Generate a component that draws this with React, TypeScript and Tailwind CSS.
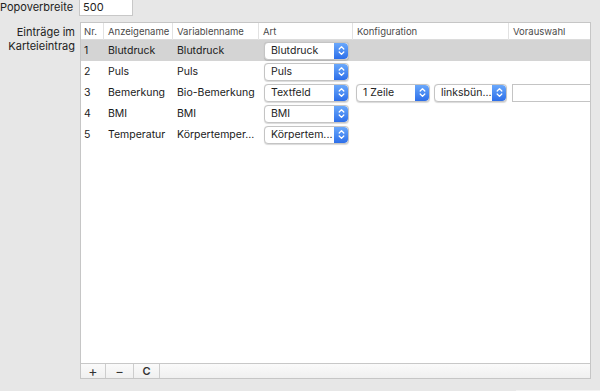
const rows = [
  { nr: '1', name: 'Blutdruck', variable: 'Blutdruck', art: 'Blutdruck', selected: true },
  { nr: '2', name: 'Puls', variable: 'Puls', art: 'Puls' },
  { nr: '3', name: 'Bemerkung', variable: 'Bio-Bemerkung', art: 'Textfeld', config: true },
  { nr: '4', name: 'BMI', variable: 'BMI', art: 'BMI' },
  { nr: '5', name: 'Temperatur', variable: 'Körpertemper...', art: 'Körpertem...' },
]

const cols = 'grid grid-cols-[23px_69px_86px_94px_156px_1fr]'

function Stepper() {
  return (
    <div className="w-[14px] self-stretch rounded-r-[4px] bg-gradient-to-b from-[#6aa8fb] to-[#2d6ee9] flex items-center justify-center">
      <svg width="7" height="11" viewBox="0 0 7 11" fill="none" stroke="white" strokeWidth="1.3" strokeLinecap="round" strokeLinejoin="round">
        <path d="M1.2 4 L3.5 1.6 L5.8 4" />
        <path d="M1.2 7 L3.5 9.4 L5.8 7" />
      </svg>
    </div>
  )
}

function Popup({ label, width }: { label: string; width: string }) {
  return (
    <div className={`${width} h-[18px] flex rounded-[4px] bg-white border border-[#c4c4c4] shadow-[0_0.5px_1px_rgba(0,0,0,0.15)] overflow-hidden`}>
      <div className="flex-1 pl-[6px] text-[10.5px] leading-[16px] text-[#1e1e1e] whitespace-nowrap overflow-hidden">{label}</div>
      <Stepper />
    </div>
  )
}

export default function App() {
  return (
    <div
      className="w-[600px] h-[391px] bg-[#e7e7e7] overflow-hidden flex flex-col"
      style={{ fontFamily: 'Inter, "Noto Sans", sans-serif' }}
    >
      {/* Popoverbreite */}
      <div className="flex items-start">
        <div className="w-[76px] text-right text-[11px] leading-[15px] text-[#222] pr-[3px]">Popoverbreite</div>
        <div className="ml-[3px] w-[54px] h-[16px] bg-white border border-[#c8c8c8] border-t-0 pl-[3px] text-[11px] leading-[15px] text-[#222]">500</div>
      </div>

      <div className="flex mt-[6px]">
        <div className="w-[76px] text-right text-[11px] leading-[14px] text-[#222] pt-[3px] pr-[1px]">
          Einträge im
          <br />
          Karteieintrag
        </div>

        {/* Table */}
        <div className="ml-[4px] w-[511px] h-[357px] border border-[#c6c6c6] bg-white flex flex-col">
          <div className={`${cols} h-[17px] border-b border-[#dcdcdc] text-[9.5px] leading-[17px] text-[#4a4a4a]`}>
            <div className="pl-[3px] border-r border-[#e2e2e2]">Nr.</div>
            <div className="pl-[4px] border-r border-[#e2e2e2]">Anzeigename</div>
            <div className="pl-[4px] border-r border-[#e2e2e2]">Variablenname</div>
            <div className="pl-[4px] border-r border-[#e2e2e2]">Art</div>
            <div className="pl-[4px] border-r border-[#e2e2e2]">Konfiguration</div>
            <div className="pl-[4px]">Vorauswahl</div>
          </div>

          <div className="flex-1 overflow-hidden">
            {rows.map((r) => (
              <div
                key={r.nr}
                className={`${cols} h-[21px] items-center text-[10.5px] text-[#1a1a1a] ${r.selected ? 'bg-[#d4d4d4]' : ''}`}
              >
                <div className="pl-[3px]">{r.nr}</div>
                <div className="pl-[4px] whitespace-nowrap overflow-hidden">{r.name}</div>
                <div className="pl-[4px] whitespace-nowrap overflow-hidden">{r.variable}</div>
                <div className="pl-[5px]">
                  <Popup label={r.art} width="w-[85px]" />
                </div>
                <div className="pl-[3px] flex gap-[4px]">
                  {r.config && (
                    <>
                      <Popup label="1 Zeile" width="w-[74px]" />
                      <Popup label="linksbün..." width="w-[73px]" />
                    </>
                  )}
                </div>
                <div className="pl-[3px]">
                  {r.config && <div className="h-[18px] bg-white border border-[#c4c4c4] border-r-0" />}
                </div>
              </div>
            ))}
          </div>

          {/* Footer */}
          <div className="h-[15px] border-t border-[#c8c8c8] bg-gradient-to-b from-[#fafafa] to-[#f0f0f0] flex text-[#333]">
            <div className="w-[25px] border-r border-[#cdcdcd] flex items-center justify-center text-[14px] leading-none">+</div>
            <div className="w-[28px] border-r border-[#cdcdcd] flex items-center justify-center text-[13px] leading-none">−</div>
            <div className="w-[26px] border-r border-[#cdcdcd] flex items-center justify-center text-[11px] font-semibold leading-none">C</div>
          </div>
        </div>
      </div>

      <div className="flex justify-end mt-[11px]">
        <div className="w-[84px] h-[2px] border-t border-[#f2f2f2]" />
      </div>
    </div>
  )
}
